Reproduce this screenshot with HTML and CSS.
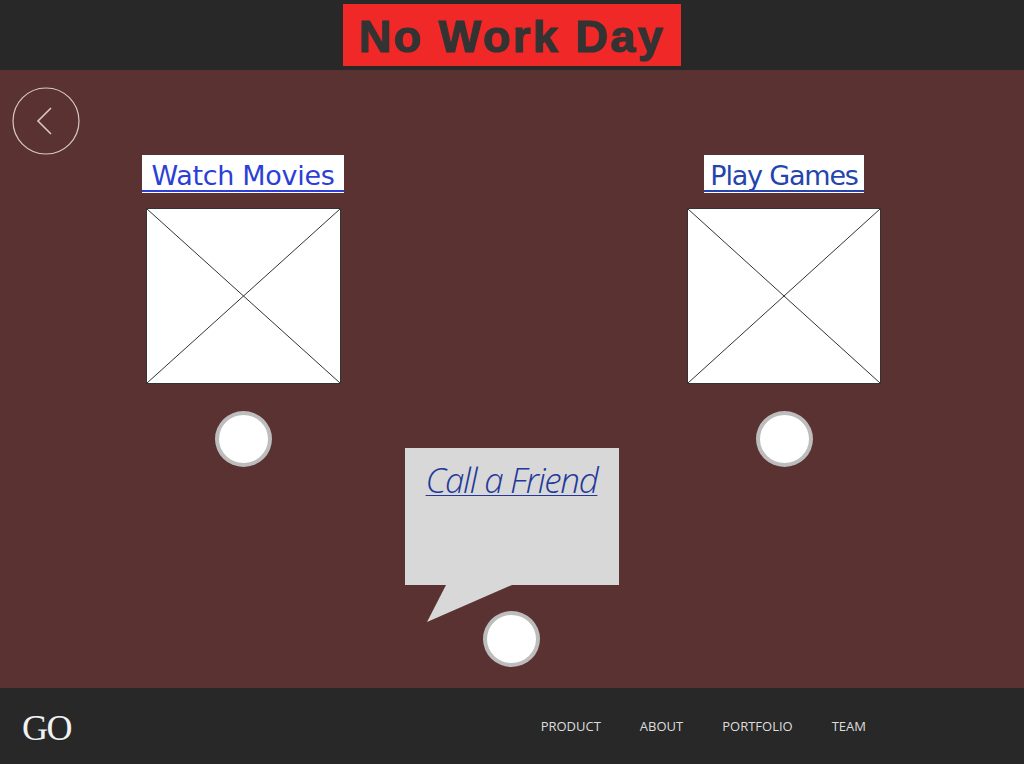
FILE: index.html
```html
<!DOCTYPE html>
<html lang="en">
<head>
<meta charset="utf-8">
<title>No Work Day</title>
<link rel="stylesheet" href="styles.css">
</head>
<body>
<header class="topbar">
  <div class="title-box"><h1 class="title">No Work Day</h1></div>
</header>
<main class="stage">
  <a class="back" href="#" aria-label="Back">
    <svg width="68" height="68" viewBox="0 0 68 68">
      <circle cx="34" cy="34" r="33" fill="none" stroke="#d9c7c7" stroke-width="1.2"/>
      <polyline points="39,21 26,34 39,47" fill="none" stroke="#d9c7c7" stroke-width="1.6"/>
    </svg>
  </a>
  <div class="grid">
    <section class="col">
      <div class="label label-wide"><a class="label-link movies" href="#">Watch Movies</a></div>
      <div class="placeholder">
        <svg width="195" height="176" viewBox="0 0 195 176" preserveAspectRatio="none">
          <rect x="0.5" y="0.5" width="194" height="175" fill="#fff" stroke="#333" stroke-width="1"/>
          <line x1="1" y1="1" x2="194" y2="175" stroke="#333" stroke-width="1"/>
          <line x1="194" y1="1" x2="1" y2="175" stroke="#333" stroke-width="1"/>
        </svg>
      </div>
      <span class="dot"></span>
    </section>
    <section class="col col-mid">
      <div class="bubble">
        <a class="bubble-link" href="#">Call a Friend</a>
        <svg class="tail" width="90" height="38" viewBox="0 0 90 38">
          <polygon points="19,0 85,0 0,37" fill="#d8d8d8"/>
        </svg>
      </div>
      <span class="dot dot-bottom"></span>
    </section>
    <section class="col">
      <div class="label label-narrow"><a class="label-link games" href="#">Play Games</a></div>
      <div class="placeholder">
        <svg width="194" height="176" viewBox="0 0 194 176" preserveAspectRatio="none">
          <rect x="0.5" y="0.5" width="193" height="175" fill="#fff" stroke="#333" stroke-width="1"/>
          <line x1="1" y1="1" x2="193" y2="175" stroke="#333" stroke-width="1"/>
          <line x1="193" y1="1" x2="1" y2="175" stroke="#333" stroke-width="1"/>
        </svg>
      </div>
      <span class="dot"></span>
    </section>
  </div>
</main>
<footer class="footer">
  <div class="logo">GO</div>
  <nav class="nav">
    <a href="#">PRODUCT</a>
    <a href="#">ABOUT</a>
    <a href="#">PORTFOLIO</a>
    <a href="#">TEAM</a>
  </nav>
</footer>
</body>
</html>
```
FILE: styles.css
```css
* { box-sizing: border-box; }
html, body { margin: 0; padding: 0; }
body {
  width: 1024px;
  height: 764px;
  overflow: hidden;
  background: #5a3232;
  font-family: "Liberation Sans", Arial, sans-serif;
}
.topbar {
  height: 70px;
  background: #282828;
  display: flex;
  justify-content: center;
  padding-top: 4px;
  padding-left: 0;
}
.title-box {
  width: 338px;
  height: 62px;
  background: #f02828;
  display: flex;
  align-items: center;
  justify-content: center;
}
.title {
  margin: 0;
  font-family: "Liberation Sans", Arial, sans-serif;
  font-weight: 700;
  font-size: 45px;
  letter-spacing: 2.5px;
  line-height: 1;
  color: #333333;
  -webkit-text-stroke: 1.2px #333333;
  margin-top: 2px;
}
.stage {
  position: relative;
  height: 618px;
  background: #5a3232;
}
.back {
  position: absolute;
  left: 12px;
  top: 17px;
  display: block;
  width: 68px;
  height: 68px;
}
.back svg { display: block; }
.grid {
  display: grid;
  grid-template-columns: 300px 241px 300px;
  margin-left: 93px;
  padding-top: 85px;
}
.col {
  display: flex;
  flex-direction: column;
  align-items: center;
}
.col-mid { padding-right: 4px; }
.label {
  background: #fff;
  height: 38px;
  padding-bottom: 1px;
}
.label-wide { width: 202px; }
.label-narrow { width: 160px; }
.label-link {
  display: block;
  height: 37px;
  padding-top: 6px;
  text-align: center;
  font-family: "DejaVu Sans", sans-serif;
  font-size: 27px;
  line-height: 30px;
  text-decoration: none;
  border-bottom: 2px solid currentColor;
  white-space: nowrap;
  letter-spacing: -0.3px;
}
.movies { color: #2c3fd6; }
.games { color: #2445ad; letter-spacing: -1.2px; }
.placeholder {
  margin-top: 15px;
  height: 176px;
}
.placeholder svg { display: block; }
.dot {
  display: block;
  width: 57px;
  height: 56px;
  margin-top: 27px;
  border-radius: 50%;
  background: #fff;
  border: 4px solid #bdbdbd;
}
.bubble {
  position: relative;
  margin-top: 293px;
  width: 214px;
  height: 137px;
  background: #d8d8d8;
  text-align: center;
  padding-top: 10px;
}
.bubble-link {
  font-family: "Open Sans", sans-serif;
  font-style: italic;
  font-weight: 300;
  font-size: 35px;
  line-height: 44px;
  letter-spacing: -1.3px;
  color: #23389a;
  text-decoration: underline;
  text-decoration-thickness: 1px;
  text-underline-offset: 2px;
}
.tail {
  position: absolute;
  left: 22px;
  top: 137px;
  display: block;
}
.dot-bottom { margin-top: 26px; }
.footer {
  height: 76px;
  background: #282828;
  display: flex;
  align-items: center;
  justify-content: space-between;
  padding: 0 158px 0 22px;
}
.logo {
  font-family: "Liberation Serif", serif;
  font-size: 36px;
  color: #f2f2f2;
  letter-spacing: -1.5px;
  line-height: 1;
  margin-top: 4px;
}
.nav {
  display: flex;
  gap: 39px;
  margin-top: 0;
}
.nav a {
  font-family: "Open Sans", sans-serif;
  font-size: 13px;
  color: #dddddd;
  text-decoration: none;
}
```
